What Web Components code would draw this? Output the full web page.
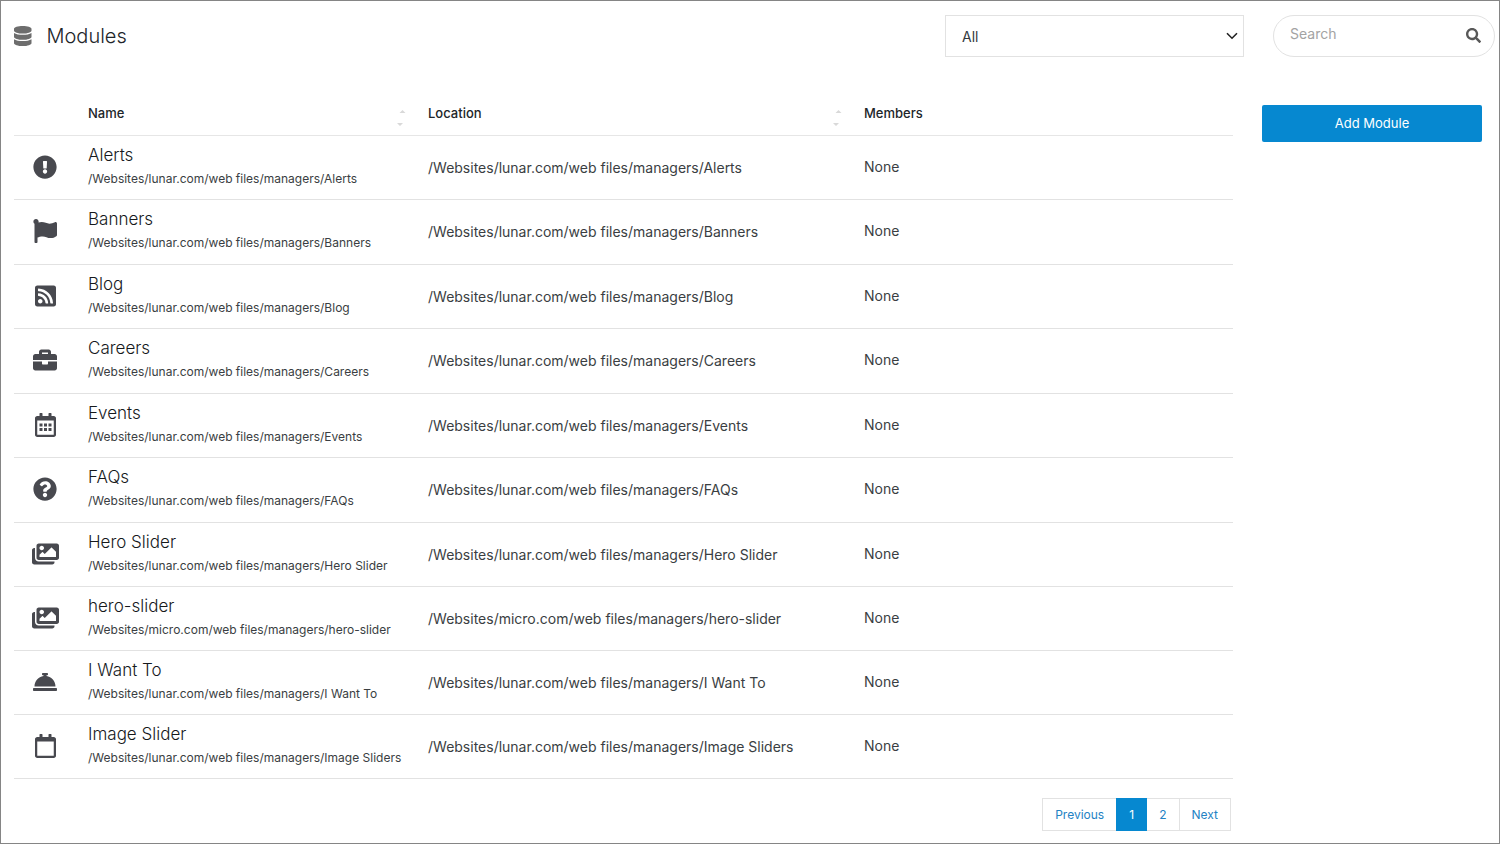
<!DOCTYPE html>
<html lang="en">
<head>
<meta charset="utf-8">
<meta name="viewport" content="width=device-width, initial-scale=1">
<title>Modules</title>
<style>
  html { height: 100%; }
  body { margin: 0; min-height: 100%; display: flex; background: #fff; font-family: Inter, "Liberation Sans", sans-serif; color: #212529; }
</style>
</head>
<body>
<module-manager></module-manager>

<script>
const ICONS = {
  database: ['0 0 448 512', 'M448 73.143v45.714C448 159.143 347.667 192 224 192S0 159.143 0 118.857V73.143C0 32.857 100.333 0 224 0s224 32.857 224 73.143zM448 176v102.857C448 319.143 347.667 352 224 352S0 319.143 0 278.857V176c48.125 33.143 136.208 48.572 224 48.572S399.874 209.143 448 176zm0 160v102.857C448 479.143 347.667 512 224 512S0 479.143 0 438.857V336c48.125 33.143 136.208 48.572 224 48.572S399.874 369.143 448 336z'],
  search: ['0 0 512 512', 'M505 442.7L405.3 343c-4.5-4.5-10.6-7-17-7H372c27.6-35.3 44-79.7 44-128C416 93.1 322.9 0 208 0S0 93.1 0 208s93.1 208 208 208c48.3 0 92.7-16.4 128-44v16.3c0 6.4 2.5 12.5 7 17l99.7 99.7c9.4 9.4 24.6 9.4 33.9 0l28.3-28.3c9.4-9.4 9.4-24.6.1-34zM208 336c-70.7 0-128-57.2-128-128 0-70.7 57.2-128 128-128 70.7 0 128 57.2 128 128 0 70.7-57.2 128-128 128z'],
  alert: ['0 0 512 512', 'M504 256c0 136.997-111.043 248-248 248S8 392.997 8 256C8 119.083 119.043 8 256 8s248 111.083 248 248zm-248 50c-25.405 0-46 20.595-46 46s20.595 46 46 46 46-20.595 46-46-20.595-46-46-46zm-43.673-165.346l7.418 136c.347 6.364 5.609 11.346 11.982 11.346h48.546c6.373 0 11.635-4.982 11.982-11.346l7.418-136c.375-6.874-5.098-12.654-11.982-12.654h-63.383c-6.884 0-12.356 5.78-11.981 12.654z'],
  question: ['0 0 512 512', 'M504 256c0 136.997-111.043 248-248 248S8 392.997 8 256C8 119.083 119.043 8 256 8s248 111.083 248 248zM262.655 90c-54.497 0-89.255 22.957-116.549 63.758-3.536 5.286-2.353 12.415 2.715 16.258l34.699 26.31c5.205 3.947 12.621 3.008 16.665-2.122 17.864-22.658 30.113-35.797 57.303-35.797 20.429 0 45.698 13.148 45.698 32.958 0 14.976-12.363 22.667-32.534 33.976C247.128 238.528 216 254.941 216 296v4c0 6.627 5.373 12 12 12h56c6.627 0 12-5.373 12-12v-1.333c0-28.462 83.186-29.647 83.186-106.667 0-58.002-60.165-102-116.531-102zM256 338c-25.365 0-46 20.635-46 46 0 25.364 20.635 46 46 46s46-20.636 46-46c0-25.365-20.635-46-46-46z'],
  flag: ['0 0 512 512', 'M349.565 98.783C295.978 98.783 251.721 64 184.348 64c-24.955 0-47.309 4.384-68.045 12.013a55.947 55.947 0 0 0 3.586-23.562C118.117 24.015 94.806 1.206 66.338.048 34.345-1.254 8 24.296 8 56c0 19.026 9.497 35.825 24 45.945V488c0 13.255 10.745 24 24 24h16c13.255 0 24-10.745 24-24v-94.4c28.311-12.064 63.582-22.122 114.435-22.122 53.588 0 97.844 34.783 165.217 34.783 48.169 0 86.667-16.294 122.505-40.858C506.84 359.452 512 349.571 512 339.045v-243.1c0-23.393-24.269-38.87-45.485-29.016-34.338 15.948-76.454 31.854-116.95 31.854z'],
  rss: ['0 0 448 512', 'M400 32H48C21.49 32 0 53.49 0 80v352c0 26.51 21.49 48 48 48h352c26.51 0 48-21.49 48-48V80c0-26.51-21.49-48-48-48zM112 416c-26.51 0-48-21.49-48-48s21.49-48 48-48 48 21.49 48 48-21.49 48-48 48zm157.533 0h-34.335c-6.011 0-11.051-4.636-11.442-10.634-5.214-80.05-69.243-143.92-149.123-149.123-5.997-.39-10.633-5.431-10.633-11.441v-34.335c0-6.535 5.468-11.777 11.994-11.425 110.546 5.974 198.997 94.536 204.964 204.964.352 6.526-4.89 11.994-11.425 11.994zm103.027 0h-34.334c-6.161 0-11.175-4.882-11.427-11.038-5.598-136.535-115.204-246.161-251.76-251.76C68.882 152.949 64 147.935 64 141.774V107.44c0-6.454 5.338-11.664 11.787-11.432 167.83 6.025 302.21 141.191 308.205 308.205.232 6.449-4.978 11.787-11.432 11.787z'],
  briefcase: ['0 0 512 512', 'M320 336c0 8.84-7.16 16-16 16h-96c-8.84 0-16-7.16-16-16v-48H0v144c0 25.6 22.4 48 48 48h416c25.6 0 48-22.4 48-48V288H320v48zm144-208h-80V80c0-25.6-22.4-48-48-48H176c-25.6 0-48 22.4-48 48v48H48c-25.6 0-48 22.4-48 48v80h512v-80c0-25.6-22.4-48-48-48zm-144 0H192V96h128v32z'],
  events: ['0 0 448 512', 'M400 64h-48V12c0-6.6-5.4-12-12-12h-40c-6.6 0-12 5.4-12 12v52H160V12c0-6.6-5.4-12-12-12h-40c-6.6 0-12 5.4-12 12v52H48C21.5 64 0 85.5 0 112v352c0 26.5 21.5 48 48 48h352c26.5 0 48-21.5 48-48V112c0-26.5-21.5-48-48-48zm-6 400H54c-3.3 0-6-2.7-6-6V160h352v298c0 3.3-2.7 6-6 6zM96 224h64v64H96zM192 224h64v64h-64zM288 224h64v64h-64zM96 320h64v64H96zM192 320h64v64h-64zM288 320h64v64h-64z'],
  calendar: ['0 0 448 512', 'M400 64h-48V12c0-6.6-5.4-12-12-12h-40c-6.6 0-12 5.4-12 12v52H160V12c0-6.6-5.4-12-12-12h-40c-6.6 0-12 5.4-12 12v52H48C21.5 64 0 85.5 0 112v352c0 26.5 21.5 48 48 48h352c26.5 0 48-21.5 48-48V112c0-26.5-21.5-48-48-48zm-6 400H54c-3.3 0-6-2.7-6-6V160h352v298c0 3.3-2.7 6-6 6z'],
  images: ['0 0 576 512', 'M480 416v16c0 26.51-21.49 48-48 48H48c-26.51 0-48-21.49-48-48V176c0-26.51 21.49-48 48-48h16v208c0 44.112 35.888 80 80 80h336zm96-80V80c0-26.51-21.49-48-48-48H144c-26.51 0-48 21.49-48 48v256c0 26.51 21.49 48 48 48h384c26.51 0 48-21.49 48-48zM256 128c0 26.51-21.49 48-48 48s-48-21.49-48-48 21.49-48 48-48 48 21.49 48 48zm-96 144l55.515-55.515c4.686-4.686 12.284-4.686 16.971 0L272 256l135.515-135.515c4.686-4.686 12.284-4.686 16.971 0L512 208v112H160v-48z'],
  bell: ['0 0 512 512', 'M288 130.54V112h16c8.84 0 16-7.16 16-16V80c0-8.84-7.16-16-16-16h-96c-8.84 0-16 7.16-16 16v16c0 8.84 7.16 16 16 16h16v18.54C115.49 146.11 32 239.18 32 352h448c0-112.82-83.49-205.89-192-221.46zM496 384H16c-8.84 0-16 7.16-16 16v32c0 8.84 7.16 16 16 16h480c8.84 0 16-7.16 16-16v-32c0-8.84-7.16-16-16-16z']
};

const MODULES = [
  ['alert', 'Alerts', '/Websites/lunar.com/web files/managers/Alerts'],
  ['flag', 'Banners', '/Websites/lunar.com/web files/managers/Banners'],
  ['rss', 'Blog', '/Websites/lunar.com/web files/managers/Blog'],
  ['briefcase', 'Careers', '/Websites/lunar.com/web files/managers/Careers'],
  ['events', 'Events', '/Websites/lunar.com/web files/managers/Events'],
  ['question', 'FAQs', '/Websites/lunar.com/web files/managers/FAQs'],
  ['images', 'Hero Slider', '/Websites/lunar.com/web files/managers/Hero Slider'],
  ['images', 'hero-slider', '/Websites/micro.com/web files/managers/hero-slider'],
  ['bell', 'I Want To', '/Websites/lunar.com/web files/managers/I Want To'],
  ['calendar', 'Image Slider', '/Websites/lunar.com/web files/managers/Image Sliders']
];

class Part extends HTMLElement {
  constructor() {
    super();
    this.attachShadow({ mode: 'open' });
  }
  connectedCallback() {
    this.shadowRoot.innerHTML = `<style>*{box-sizing:border-box}${this.css()}</style>${this.html()}`;
  }
}

customElements.define('glyph-icon', class extends Part {
  css() {
    return `:host{display:inline-flex;justify-content:center;height:var(--icon-size,24px)}
      svg{display:block;height:100%;width:auto;fill:currentColor}`;
  }
  html() {
    const [box, d] = ICONS[this.getAttribute('name')];
    return `<svg viewBox="${box}" aria-hidden="true"><path d="${d}"/></svg>`;
  }
});

customElements.define('page-header', class extends Part {
  css() {
    return `:host{display:flex;align-items:center;height:42px}
      glyph-icon{--icon-size:20px;color:#6d6d6d}
      h1{margin:0 auto 0 15px;font-size:20px;line-height:24px;font-weight:300}
      ::slotted(*){flex:none;margin-left:29px}`;
  }
  html() {
    return `<glyph-icon name="database"></glyph-icon><h1>${this.getAttribute('heading')}</h1><slot></slot>`;
  }
});

customElements.define('type-filter', class extends Part {
  css() {
    return `:host{display:block;position:relative;width:299px}
      select{appearance:none;display:block;width:100%;height:42px;padding:2px 32px 0 16px;border:1px solid #e2e2e2;border-radius:0;background:#fff;color:#343a40;font:400 14px/20px Inter,"Liberation Sans",sans-serif}
      svg{position:absolute;right:6px;top:17px;width:12px;height:8px;fill:none;stroke:#222;stroke-width:1.6;pointer-events:none}`;
  }
  html() {
    return `<select aria-label="Filter modules"><option>All</option></select>
      <svg viewBox="0 0 12 8" aria-hidden="true"><path d="M1 1.2l5 5 5-5"/></svg>`;
  }
});

customElements.define('search-box', class extends Part {
  css() {
    return `:host{display:flex;align-items:center;width:222px;height:42px;padding:0 13px 2px 16px;border:1px solid #e2e2e2;border-radius:21px;box-sizing:border-box}
      input{flex:1;min-width:0;padding:0 0 2px;border:0;outline:0;background:none;font:400 14px/20px Inter,"Liberation Sans",sans-serif;color:#343a40}
      input::placeholder{color:#a3a3a3;opacity:1}
      button{display:flex;padding:0;border:0;background:none;color:#585858;--icon-size:15px}`;
  }
  html() {
    return `<input type="text" placeholder="Search" aria-label="Search"><button type="button" aria-label="Run search"><glyph-icon name="search"></glyph-icon></button>`;
  }
});

customElements.define('sort-arrows', class extends Part {
  css() {
    return `:host{display:block;width:10px;height:18px}svg{display:block;fill:#d9d9d9}`;
  }
  html() {
    return `<svg width="10" height="18" viewBox="0 0 10 18" aria-hidden="true"><path d="M3.5 4L6.5 1l3 3zM1 14h6l-3 3z"/></svg>`;
  }
});

customElements.define('module-table', class extends Part {
  css() {
    return `:host{display:block}
      table{width:100%;border-collapse:separate;border-spacing:0;table-layout:fixed}
      .c-icon{width:64px}.c-name{width:340px}.c-loc{width:436px}
      th{height:47px;padding:16px 10px 0;border-bottom:1px solid #e6e6e6;text-align:left;vertical-align:top;font-size:13px;line-height:16px;font-weight:500}
      .sort{display:flex;justify-content:space-between}
      sort-arrows{margin:4px 2px 0 0}
      td{height:64px;padding:0 10px 2px;border-bottom:1px solid #e2e2e2;vertical-align:middle;color:#3a3e42;font-size:14px;line-height:20px;font-weight:400}
      td:nth-child(3){padding-bottom:0}
      tr:nth-child(even):nth-child(-n+6) td{height:65px}
      td:first-child{padding:0 2px 2px 0;text-align:center;color:#48494f;line-height:0}
      strong{display:block;color:#16191c;font-size:17px;line-height:24px;font-weight:300}
      small{display:block;font-size:12px;line-height:24px;font-weight:400}`;
  }
  html() {
    const rows = MODULES.map(([icon, name, path]) => `<tr>
      <td><glyph-icon name="${icon}"></glyph-icon></td>
      <td><strong>${name}</strong><small>${path}</small></td>
      <td>${path}</td><td>None</td></tr>`).join('');
    return `<table>
      <colgroup><col class="c-icon"><col class="c-name"><col class="c-loc"><col></colgroup>
      <thead><tr><th></th>
        <th scope="col"><div class="sort">Name<sort-arrows></sort-arrows></div></th>
        <th scope="col"><div class="sort">Location<sort-arrows></sort-arrows></div></th>
        <th scope="col">Members</th></tr></thead>
      <tbody>${rows}</tbody></table>`;
  }
});

customElements.define('page-links', class extends Part {
  css() {
    return `:host{display:flex;justify-content:flex-end}
      nav{display:flex;border:1px solid #e2e2e2}
      a{display:block;min-width:31px;padding:0 12px;color:#2382c4;text-align:center;text-decoration:none;font-size:12px;line-height:31px}
      a+a{border-left:1px solid #e2e2e2}
      a[aria-current]{margin:-1px 0;padding:1px 12px;border:0;background:#0688d0;color:#fff}
      a[aria-current]+a{border:0}`;
  }
  html() {
    return `<nav aria-label="Pages"><a href="#prev">Previous</a><a href="#1" aria-current="page">1</a><a href="#2">2</a><a href="#next">Next</a></nav>`;
  }
});

customElements.define('action-button', class extends Part {
  css() {
    return `:host{display:block}
      button{display:block;width:100%;height:37px;padding:0 0 2px;border:0;border-radius:2px;background:#0688d0;color:#fff;font:400 13px/20px Inter,"Liberation Sans",sans-serif}`;
  }
  html() { return `<button type="button"><slot></slot></button>`; }
});

customElements.define('module-manager', class extends Part {
  css() {
    return `:host{display:block;flex:1;min-width:0;box-sizing:border-box;padding:14px 4px 11px 13px;border:1px solid #858585}
      main{display:grid;grid-template-columns:minmax(0,1fr) 220px;column-gap:29px;padding:32px 13px 0 0}
      page-links{margin:19px 2px 0 0}
      action-button{margin-top:16px}`;
  }
  html() {
    return `<page-header heading="Modules"><type-filter></type-filter><search-box></search-box></page-header>
      <main><section><module-table></module-table><page-links></page-links></section>
      <aside><action-button>Add Module</action-button></aside></main>`;
  }
});
</script>
</body>
</html>
